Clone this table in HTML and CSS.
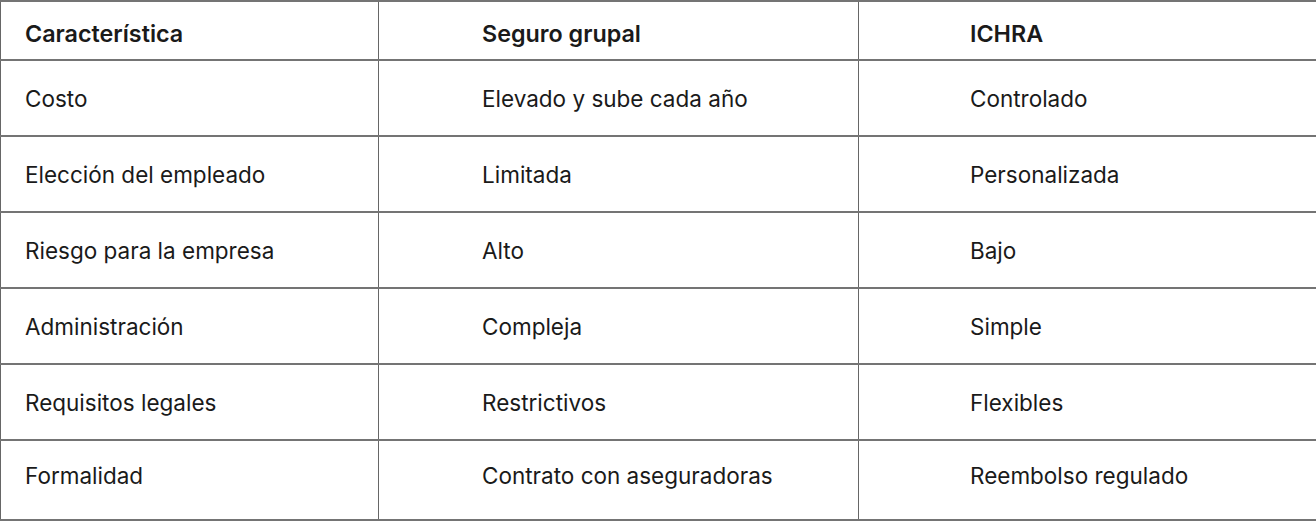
FILE: index.html
```html
<!DOCTYPE html>
<html lang="es">
<head>
<meta charset="utf-8">
<title>Comparación</title>
<link rel="stylesheet" href="styles.css">
</head>
<body>
<table class="cmp">
  <colgroup>
    <col class="c1"><col class="c2"><col class="c3">
  </colgroup>
  <thead>
    <tr class="head">
      <th class="col-a">Característica</th>
      <th class="col-b">Seguro grupal</th>
      <th class="col-c">ICHRA</th>
    </tr>
  </thead>
  <tbody>
    <tr><td class="col-a">Costo</td><td class="col-b">Elevado y sube cada año</td><td class="col-c">Controlado</td></tr>
    <tr><td class="col-a">Elección del empleado</td><td class="col-b">Limitada</td><td class="col-c">Personalizada</td></tr>
    <tr><td class="col-a">Riesgo para la empresa</td><td class="col-b">Alto</td><td class="col-c">Bajo</td></tr>
    <tr><td class="col-a">Administración</td><td class="col-b">Compleja</td><td class="col-c">Simple</td></tr>
    <tr><td class="col-a">Requisitos legales</td><td class="col-b">Restrictivos</td><td class="col-c">Flexibles</td></tr>
    <tr class="last"><td class="col-a">Formalidad</td><td class="col-b">Contrato con aseguradoras</td><td class="col-c">Reembolso regulado</td></tr>
  </tbody>
</table>
</body>
</html>
```
FILE: styles.css
```css
html, body {
  margin: 0;
  padding: 0;
  background: #fff;
}
body {
  font-family: Inter, "Noto Sans", sans-serif;
  color: #1a1a1a;
  overflow: hidden;
}
.cmp {
  width: 1316px;
  table-layout: fixed;
  border-collapse: collapse;
  font-size: 22.5px;
  line-height: 27px;
}
.c1 { width: 378px; }
.c2 { width: 480px; }
.c3 { width: 458px; }
.cmp th, .cmp td {
  border-left: 1px solid #666;
  border-right: 1px solid #666;
  border-top: 2px solid #747474;
  border-bottom: 2px solid #747474;
  text-align: left;
  vertical-align: middle;
  padding: 0;
  white-space: nowrap;
}
.cmp th {
  font-weight: 600;
  font-size: 23.3px;
  height: 52px;
  padding-top: 5px;
}
.cmp td {
  font-weight: 400;
  height: 74px;
}
.cmp .last td {
  height: 80px;
  vertical-align: top;
  padding-top: 21px;
  box-sizing: border-box;
}
.col-a { padding-left: 24px !important; }
.col-b { padding-left: 103px !important; }
.col-c { padding-left: 111px !important; }
```
